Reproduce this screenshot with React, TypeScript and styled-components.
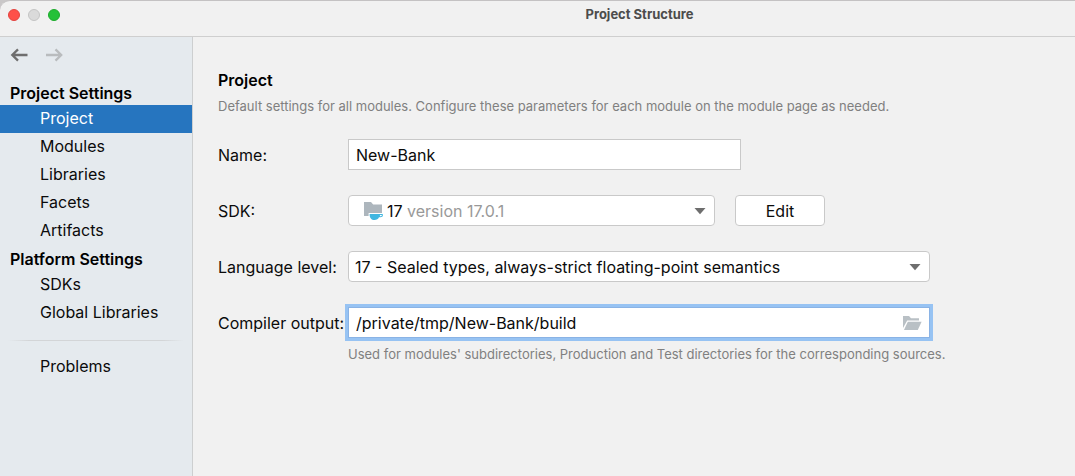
import React from "react";
import styled, { createGlobalStyle, css } from "styled-components";

const GlobalStyle = createGlobalStyle`
  * { box-sizing: border-box; }
  body {
    margin: 0;
    background: #c9c7c8;
    color: #0b0b0b;
    font: 16px/20px Inter, "Liberation Sans", sans-serif;
  }
`;

const Window = styled.div`
  display: flex;
  flex-direction: column;
  min-height: 100vh;
  overflow: hidden;
  border-top: 1px solid #c4c2c3;
  border-top-left-radius: 10px;
  background: #f1f1f1;
`;

const TitleBar = styled.header`
  display: grid;
  grid-template-columns: 204px 1fr;
  height: 36px;
  padding-top: 3px;
  border-bottom: 1px solid #cfcfcf;
`;

const Lights = styled.div`
  display: flex;
  gap: 8px;
  padding: 5px 8px;
`;

const Light = styled.button<{ $fill: string; $edge: string }>`
  width: 12px;
  height: 12px;
  padding: 0;
  border: 1px solid ${(p) => p.$edge};
  border-radius: 50%;
  background: ${(p) => p.$fill};
`;

const WindowTitle = styled.h1`
  margin: 0;
  color: #4c4c4c;
  font-size: 13px;
  font-weight: 700;
  line-height: 20px;
  text-align: center;
`;

const Body = styled.div`
  display: flex;
  flex: 1;
`;

const Sidebar = styled.nav`
  flex: none;
  width: 193px;
  border-right: 1px solid #cdcfd0;
  background: #e5eaee;
`;

const History = styled.div`
  display: flex;
  gap: 17px;
  height: 42px;
  padding: 9px 10px;
`;

const HistoryButton = styled.button`
  width: 18px;
  height: 18px;
  padding: 0;
  border: 0;
  background: none;
  color: #6e6e6e;

  &:disabled { color: #b9bcbe; }
  svg { display: block; }
`;

const GroupTitle = styled.h2`
  margin: 0;
  padding: 2px 0 0 10px;
  color: #000000;
  font-size: 16px;
  font-weight: 600;
  line-height: 24px;
`;

const NavList = styled.ul`
  margin: 0;
  padding: 0;
  list-style: none;
`;

const NavLink = styled.a<{ $active?: boolean }>`
  display: block;
  padding: 0 0 2px 40px;
  color: ${(p) => (p.$active ? "#ffffff" : "inherit")};
  background: ${(p) => (p.$active ? "#2675bf" : "transparent")};
  line-height: 26px;
  text-decoration: none;
`;

const Separator = styled.hr`
  height: 1px;
  margin: 13px 8px 12px;
  border: 0;
  background: linear-gradient(to right, transparent, #d3d5d7 12%, #d3d5d7 88%, transparent);
`;

const Main = styled.main`
  flex: 1;
  min-width: 0;
  padding: 33px 24px 24px 25px;
`;

const PageTitle = styled.h2`
  margin: 0;
  color: #000000;
  font-size: 16px;
  font-weight: 600;
  line-height: 20px;
`;

const Hint = styled.p`
  margin: 0;
  color: #808080;
  font-size: 13px;
  line-height: 20px;
`;

const Intro = styled(Hint)`
  margin-top: 6px;
`;

const Form = styled.form`
  display: grid;
  grid-template-columns: 130px minmax(0, 1fr);
  align-items: center;
  row-gap: 25px;
  margin-top: 23px;
`;

const FieldRow = styled.div`
  display: flex;
  align-items: center;
  gap: 20px;
`;

const fieldBox = css`
  height: 31px;
  border: 1px solid #c9c9c9;
  background: #ffffff;
  color: inherit;
  font: inherit;
`;

const TextInput = styled.input`
  ${fieldBox}
  width: 100%;
  max-width: 393px;
  padding: 0 7px;
`;

const SelectFrame = styled.div<{ $width: number }>`
  position: relative;
  display: flex;
  align-items: center;
  width: 100%;
  max-width: ${(p) => p.$width}px;
`;

const Select = styled.select`
  ${fieldBox}
  width: 100%;
  padding: 0 32px 0 6px;
  border-radius: 4px;
  appearance: none;
`;

const SdkFace = styled.span`
  ${fieldBox}
  display: flex;
  align-items: center;
  gap: 3px;
  width: 100%;
  padding-left: 15px;
  border-radius: 4px;
`;

const SdkVersion = styled.span`
  color: #999999;
`;

const CoverSelect = styled.select`
  position: absolute;
  inset: 0;
  width: 100%;
  opacity: 0;
`;

const Arrow = styled.svg`
  position: absolute;
  right: 9px;
  pointer-events: none;
`;

const Button = styled.button`
  ${fieldBox}
  flex: none;
  width: 90px;
  padding: 0;
  border-radius: 4px;
`;

const PathField = styled.div`
  ${fieldBox}
  display: flex;
  align-items: center;
  width: 100%;
  max-width: 582px;
  padding-right: 7px;
  border-color: #8ab3e5;
  box-shadow: 0 0 0 3px #97c3f3;
`;

const PathInput = styled.input`
  flex: 1;
  min-width: 0;
  height: 100%;
  padding: 0 7px;
  border: 0;
  outline: 0;
  background: none;
  color: inherit;
  font: inherit;
`;

const BrowseButton = styled.button`
  padding: 0;
  border: 0;
  background: none;

  svg { display: block; }
`;

const OutputHint = styled(Hint)`
  margin: 6px 0 0 130px;
`;

const projectItems = ["Project", "Modules", "Libraries", "Facets", "Artifacts"];
const platformItems = ["SDKs", "Global Libraries"];

function ArrowGlyph({ flip }: { flip?: boolean }) {
  return (
    <svg width="18" height="18" viewBox="0 0 18 18" fill="none" stroke="currentColor" strokeWidth="2.3">
      <path d={flip ? "M1 9H16.3M10.5 3.4L16.2 9L10.5 14.6" : "M17.5 9H2.2M8 3.4L2.3 9L8 14.6"} />
    </svg>
  );
}

function DownArrow() {
  return (
    <Arrow width="12" height="8" viewBox="0 0 12 8" aria-hidden="true">
      <path d="M0.5 1H11.5L6 7.2Z" fill="#6e6e6e" />
    </Arrow>
  );
}

function SdkIcon() {
  return (
    <svg width="20" height="18" viewBox="0 0 20 18" aria-hidden="true">
      <path d="M0 0H7L9.2 2.6H18V11H4.6V14H0Z" fill="#adb6bd" />
      <path
        d="M5.6 12H18Q19 12 19 13Q19 15.3 16.4 15.3H15C14.2 17 12.8 18 10.4 18C7.4 18 5.6 16 5.6 12ZM15.9 13V14.3H16.6Q17.9 14.3 17.9 13Z"
        fill="#40b6e0"
        fillRule="evenodd"
      />
    </svg>
  );
}

function FolderIcon() {
  return (
    <svg width="20" height="16" viewBox="0 0 20 16" aria-hidden="true">
      <path d="M1 13V1H7L9 3.2H17V5.5H5.2Z" fill="#b9c0c5" />
      <path d="M5.8 6.8H19.6L15.8 15H2Z" fill="#b9c0c5" />
    </svg>
  );
}

function NavGroup({ items, active }: { items: string[]; active?: string }) {
  return (
    <NavList>
      {items.map((item) => (
        <li key={item}>
          <NavLink href="#" $active={item === active} aria-current={item === active ? "page" : undefined}>
            {item}
          </NavLink>
        </li>
      ))}
    </NavList>
  );
}

export default function App() {
  return (
    <>
      <GlobalStyle />
      <Window>
        <TitleBar>
          <Lights>
            <Light $fill="#fe5049" $edge="#e2443f" aria-label="Close" />
            <Light $fill="#dadada" $edge="#c4c4c4" aria-label="Minimize" />
            <Light $fill="#24c138" $edge="#1dab2c" aria-label="Zoom" />
          </Lights>
          <WindowTitle>Project Structure</WindowTitle>
        </TitleBar>
        <Body>
          <Sidebar>
            <History>
              <HistoryButton aria-label="Back">
                <ArrowGlyph />
              </HistoryButton>
              <HistoryButton aria-label="Forward" disabled>
                <ArrowGlyph flip />
              </HistoryButton>
            </History>
            <GroupTitle>Project Settings</GroupTitle>
            <NavGroup items={projectItems} active="Project" />
            <GroupTitle>Platform Settings</GroupTitle>
            <NavGroup items={platformItems} />
            <Separator />
            <NavGroup items={["Problems"]} />
          </Sidebar>
          <Main>
            <PageTitle>Project</PageTitle>
            <Intro>
              Default settings for all modules. Configure these parameters for each module on the module page as needed.
            </Intro>
            <Form onSubmit={(e) => e.preventDefault()}>
              <label htmlFor="name">Name:</label>
              <TextInput id="name" defaultValue="New-Bank" />

              <label htmlFor="sdk">SDK:</label>
              <FieldRow>
                <SelectFrame $width={367}>
                  <SdkFace aria-hidden="true">
                    <SdkIcon />
                    <span>
                      17 <SdkVersion>version 17.0.1</SdkVersion>
                    </span>
                  </SdkFace>
                  <DownArrow />
                  <CoverSelect id="sdk">
                    <option>17 version 17.0.1</option>
                  </CoverSelect>
                </SelectFrame>
                <Button type="button">Edit</Button>
              </FieldRow>

              <label htmlFor="level">Language level:</label>
              <SelectFrame $width={582}>
                <Select id="level">
                  <option>17 - Sealed types, always-strict floating-point semantics</option>
                </Select>
                <DownArrow />
              </SelectFrame>

              <label htmlFor="output">Compiler output:</label>
              <PathField>
                <PathInput id="output" defaultValue="/private/tmp/New-Bank/build" />
                <BrowseButton type="button" aria-label="Browse">
                  <FolderIcon />
                </BrowseButton>
              </PathField>
            </Form>
            <OutputHint>
              Used for modules' subdirectories, Production and Test directories for the corresponding sources.
            </OutputHint>
          </Main>
        </Body>
      </Window>
    </>
  );
}
